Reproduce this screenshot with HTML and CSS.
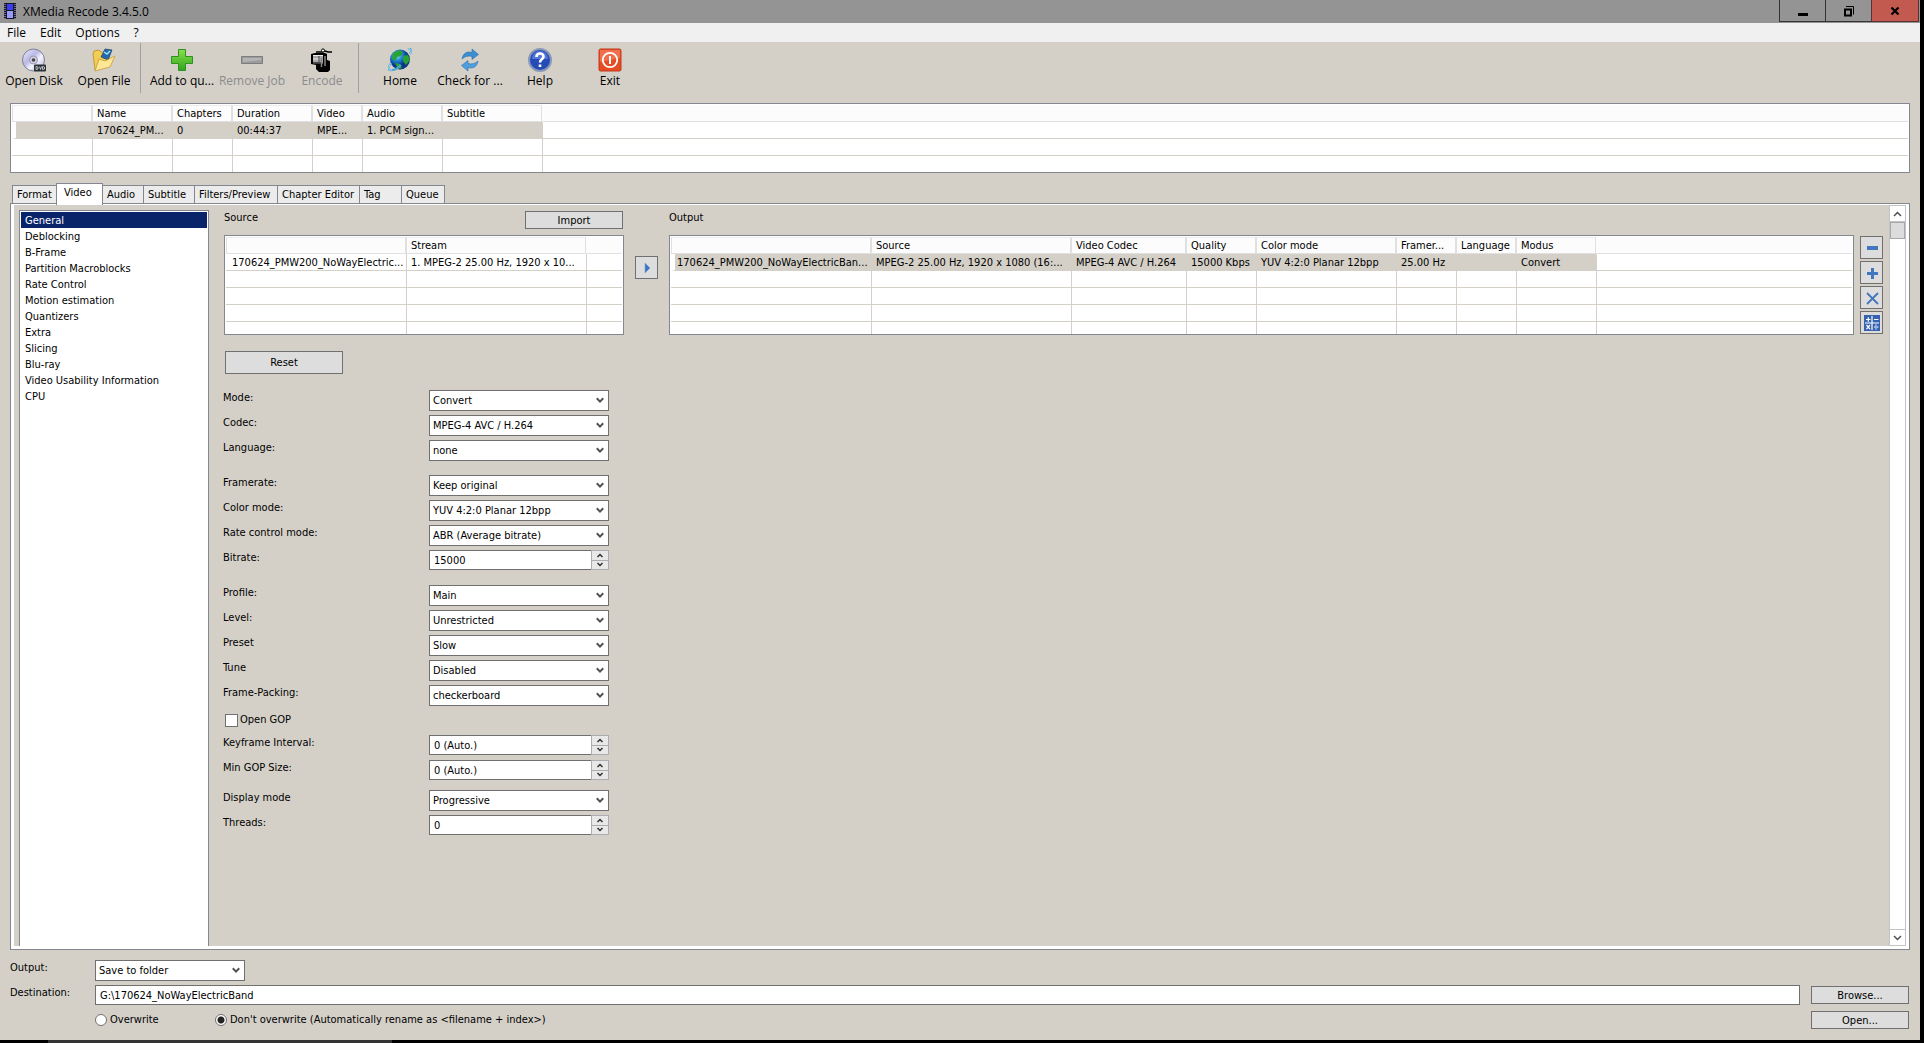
FILE: index.html
```html
<!DOCTYPE html>
<html lang="en">
<head>
<meta charset="utf-8">
<title>XMedia Recode 3.4.5.0</title>
<link rel="stylesheet" href="styles.css">
</head>
<body>
<div class="window">
  <header class="titlebar">
    <svg class="app-icon" width="12" height="16" viewBox="0 0 12 16"><rect width="12" height="16" fill="#16162a"/><rect x="3" y="1" width="6" height="6" fill="#3c3cf0"/><rect x="3" y="8" width="6" height="7" fill="#9a9afc"/><path d="M1 1v15M11 1v15" stroke="#c8c8c8" stroke-width="1" stroke-dasharray="1 1"/></svg>
    <h1>XMedia Recode 3.4.5.0</h1>
    <div class="caption-buttons">
      <button type="button" aria-label="Minimize"><svg width="12" height="12" viewBox="0 0 12 12"><path d="M1 8h10v3H1z"/></svg></button>
      <button type="button" aria-label="Restore"><svg width="12" height="12" viewBox="0 0 12 12"><path d="M2 4.500h6v6H2z" fill="none" stroke="#000" stroke-width="2"/><path d="M3 1.500h7.500v8" fill="none" stroke="#000"/></svg></button>
      <button type="button" class="close" aria-label="Close"><svg width="12" height="12" viewBox="0 0 12 12"><path d="M2.500 2.500l7 7M9.500 2.500l-7 7" stroke="#000" stroke-width="2.200"/></svg></button>
    </div>
  </header>
  <nav class="menubar">
    <button type="button">File</button><button type="button">Edit</button><button type="button">Options</button><button type="button">?</button>
  </nav>
  <div class="toolbar">
    <button type="button"><svg width="24" height="24" viewBox="0 0 24 24"><defs><linearGradient id="disc" x2="1" y2="1"><stop stop-color="#eef"/><stop offset=".4" stop-color="#b9b9e4"/><stop offset=".6" stop-color="#f4f4ff"/><stop offset="1" stop-color="#a8a8d6"/></linearGradient></defs><circle cx="11.500" cy="12" r="11" fill="url(#disc)" stroke="#7c7c96"/><circle cx="11.500" cy="12" r="4" fill="#d2d0e0" stroke="#9a98b8"/><circle cx="11.500" cy="12" r="1.800" fill="#444"/><rect x="12" y="16.500" width="12" height="7" rx="1" fill="#2a3036"/><path d="M14 18.500v3l2-.5v-2zM17.500 18.500l1 3 1-3M20.500 18.500v3l2-.5v-2z" stroke="#ddd" fill="none" stroke-width=".8"/></svg>Open Disk</button>
    <button type="button"><svg width="24" height="24" viewBox="0 0 24 24"><path d="M1 6l1-3 5-1 2 2 8 1v12L3 22z" fill="#f3cc55" stroke="#b98e26" stroke-width=".8"/><path d="M9 9l4-8 7 1-4 10z" fill="#2469a8" stroke="#174468" stroke-width=".7"/><path d="M12 4l3 2 3-3" stroke="#9fe0ff" stroke-width="1.500" fill="none"/><path d="M3 23L7 11l6 2 10-5-5 11z" fill="#fde796" stroke="#c79c34" stroke-width=".8"/></svg>Open File</button>
    <span class="separator"></span>
    <button type="button"><svg width="24" height="24" viewBox="0 0 24 24"><defs><linearGradient id="green" x2="0" y2="1"><stop stop-color="#8be04a"/><stop offset="1" stop-color="#2fa51c"/></linearGradient></defs><path d="M8.500 1.500h7v7h7v7h-7v7h-7v-7h-7v-7h7z" fill="url(#green)" stroke="#2d9220"/></svg>Add to qu...</button>
    <button type="button" disabled><svg width="24" height="24" viewBox="0 0 24 24"><path d="M1.500 8.500h21v7h-21z" fill="#9c9c9c" stroke="#7d7d7d"/><path d="M3 10h18v2l-18 2z" fill="#b4b4b4"/></svg>Remove Job</button>
    <button type="button" disabled><svg width="24" height="24" viewBox="0 0 24 24"><path d="M1 6l4-1h10l2 1v6l3 1v9l-2 2H9l-3-3v-4l-5-1z" fill="#000"/><path d="M3 7.500h10v8H3z" fill="#a8a8a8"/><path d="M3 7.500h10M3 11h7" stroke="#eee"/><path d="M3 15h9" stroke="#333" stroke-width="1.500"/><path d="M9 8v8" stroke="#444"/><path d="M11.500 10v9M15 8v10" stroke="#888" stroke-width="1.500"/><path d="M6 4h6l3-1 3 1h4" fill="none" stroke="#000" stroke-width="1.600"/><circle cx="13" cy="2.500" r="1.600" fill="#fff" stroke="#000"/></svg>Encode</button>
    <span class="separator"></span>
    <button type="button"><svg width="24" height="24" viewBox="0 0 24 24"><defs><radialGradient id="globe" cx=".35" cy=".3"><stop stop-color="#8ceaff"/><stop offset=".5" stop-color="#238ae0"/><stop offset="1" stop-color="#0a3684"/></radialGradient></defs><circle cx="12" cy="11.500" r="10" fill="url(#globe)"/><path d="M5 5l6-3 4 2-2 4-4 1-1 4-4-2zM15 8l5-1 2 5-4 5-3-4zM7 15l5 1 2 4-4 1z" fill="#28a434"/><path d="M20 1c3-1 4 1 2 5M3 15c-3 4-3 8 1 7 3 0 7-3 9-5" fill="none" stroke="#4aa4d4" stroke-width="2"/><path d="M20 1c3-1 4 1 2 5M3 15c-3 4-3 8 1 7" fill="none" stroke="#c4efff" stroke-width=".8"/></svg>Home</button>
    <button type="button"><svg width="24" height="24" viewBox="0 0 24 24"><path d="M4 11C5 5 9 3 14 4.500V1l6.500 5.500-6.500 5V8.500C10 7.500 7 8.500 4 11z" fill="#3b8ed2" stroke="#2870ae" stroke-width=".6"/><path d="M20 13c-1 6-5 8-10 6.500V23l-6.500-5.500 6.500-5v3c4 1 7 0 10-2.500z" fill="#4e9edd" stroke="#2870ae" stroke-width=".6"/></svg>Check for ...</button>
    <button type="button"><svg width="24" height="24" viewBox="0 0 24 24"><circle cx="12" cy="12" r="11" fill="#254bb7" stroke="#8a98b8" stroke-width="2"/><path d="M4 11a8 8 0 0 1 16 0z" fill="#5277d6"/><path d="M8.500 9c0-4.500 7-4.500 7-.5 0 3-3.500 2.500-3.500 6M12 16.500v2.500" fill="none" stroke="#fff" stroke-width="2.600"/></svg>Help</button>
    <button type="button"><svg width="24" height="24" viewBox="0 0 24 24"><rect x="1" y="1" width="22" height="22" rx="1.500" fill="#e64b22" stroke="#c2391a"/><path d="M2 2h20v8L2 14z" fill="#f0704c"/><circle cx="12" cy="12" r="7.200" fill="none" stroke="#fff" stroke-width="1.800"/><path d="M12 8v8" stroke="#fff" stroke-width="2"/></svg>Exit</button>
  </div>

  <main>
    <div class="listview jobs">
      <table>
        <colgroup><col class="w80"><col class="w80"><col class="w60"><col class="w80"><col class="w50"><col class="w80"><col class="w100"><col></colgroup>
        <thead><tr><th></th><th>Name</th><th>Chapters</th><th>Duration</th><th>Video</th><th>Audio</th><th>Subtitle</th><th></th></tr></thead>
        <tbody>
          <tr class="selected"><td></td><td>170624_PM...</td><td>0</td><td>00:44:37</td><td>MPE...</td><td>1. PCM sign...</td><td></td><td></td></tr>
          <tr><td></td><td></td><td></td><td></td><td></td><td></td><td></td><td></td></tr>
          <tr><td></td><td></td><td></td><td></td><td></td><td></td><td></td><td></td></tr>
        </tbody>
      </table>
    </div>

    <div class="tabs" role="tablist">
      <button type="button" role="tab">Format</button><button type="button" role="tab" aria-selected="true">Video</button><button type="button" role="tab">Audio</button><button type="button" role="tab">Subtitle</button><button type="button" role="tab">Filters/Preview</button><button type="button" role="tab">Chapter Editor</button><button type="button" role="tab">Tag</button><button type="button" role="tab">Queue</button>
    </div>

    <section class="panel">
      <div class="page">
        <ul class="categories">
          <li class="current">General</li><li>Deblocking</li><li>B-Frame</li><li>Partition Macroblocks</li><li>Rate Control</li><li>Motion estimation</li><li>Quantizers</li><li>Extra</li><li>Slicing</li><li>Blu-ray</li><li>Video Usability Information</li><li>CPU</li>
        </ul>
        <div class="settings">
          <div class="streams">
            <div class="source">
              <div class="heading"><h2>Source</h2><button type="button" class="button small">Import</button></div>
              <div class="listview">
                <table>
                  <colgroup><col class="w180"><col class="w180"><col></colgroup>
                  <thead><tr><th></th><th>Stream</th><th></th></tr></thead>
                  <tbody>
                    <tr class="indented"><td>170624_PMW200_NoWayElectric...</td><td>1. MPEG-2 25.00 Hz, 1920 x 10...</td><td></td></tr>
                    <tr><td></td><td></td><td></td></tr>
                    <tr><td></td><td></td><td></td></tr>
                    <tr><td></td><td></td><td></td></tr>
                    <tr><td></td><td></td><td></td></tr>
                  </tbody>
                </table>
              </div>
            </div>
            <button type="button" class="button square add" aria-label="Add stream"><svg width="16" height="16" viewBox="0 0 16 16"><path d="M6 3l5 5-5 5z" fill="#3f74c0" stroke="#7aa0da" stroke-width=".6"/></svg></button>
            <div class="output">
              <div class="heading"><h2>Output</h2></div>
              <div class="listview">
                <table>
                  <colgroup><col class="w200"><col class="w200"><col class="w115"><col class="w70"><col class="w140"><col class="w60"><col class="w60"><col class="w80"><col></colgroup>
                  <thead><tr><th></th><th>Source</th><th>Video Codec</th><th>Quality</th><th>Color mode</th><th>Framer...</th><th>Language</th><th>Modus</th><th></th></tr></thead>
                  <tbody>
                    <tr class="selected"><td>170624_PMW200_NoWayElectricBan...</td><td>MPEG-2 25.00 Hz, 1920 x 1080 (16:...</td><td>MPEG-4 AVC / H.264</td><td>15000 Kbps</td><td>YUV 4:2:0 Planar 12bpp</td><td>25.00 Hz</td><td></td><td>Convert</td><td></td></tr>
                    <tr><td></td><td></td><td></td><td></td><td></td><td></td><td></td><td></td><td></td></tr>
                    <tr><td></td><td></td><td></td><td></td><td></td><td></td><td></td><td></td><td></td></tr>
                    <tr><td></td><td></td><td></td><td></td><td></td><td></td><td></td><td></td><td></td></tr>
                    <tr><td></td><td></td><td></td><td></td><td></td><td></td><td></td><td></td><td></td></tr>
                  </tbody>
                </table>
              </div>
            </div>
            <div class="stream-tools">
              <button type="button" class="button square" aria-label="Remove"><svg width="16" height="16" viewBox="0 0 16 16"><path d="M3 6h11v4H3z" fill="#4377bd"/></svg></button>
              <button type="button" class="button square" aria-label="Add"><svg width="16" height="16" viewBox="0 0 16 16"><path d="M7 3h3v4h4v3h-4v4H7v-4H3V7h4z" fill="#4377bd"/></svg></button>
              <button type="button" class="button square" aria-label="Delete"><svg width="16" height="16" viewBox="0 0 16 16"><path d="M3 3l11 11M14 3L3 14" stroke="#4377bd" stroke-width="1.800"/></svg></button>
              <button type="button" class="button square" aria-label="Calculator"><svg width="16" height="16" viewBox="0 0 16 16"><path d="M0 0h16v16H0z" fill="#3563b0"/><path d="M8 1v14M1 8h14M2 4.500h4.500M4.300 2.300v4.500M10 4.500h4.500M2.500 10l3.500 4M6 10l-3.500 4M10 12h4.500M12 9.500v1.200M12 13.300v1.200" stroke="#fff" stroke-width="1.200"/></svg></button>
            </div>
          </div>

          <button type="button" class="button reset">Reset</button>

          <form>
            <div class="group">
              <div class="row"><label for="mode">Mode:</label><select id="mode"><option>Convert</option></select></div>
              <div class="row"><label for="codec">Codec:</label><select id="codec"><option>MPEG-4 AVC / H.264</option></select></div>
              <div class="row"><label for="lang">Language:</label><select id="lang"><option>none</option></select></div>
            </div>
            <div class="group">
              <div class="row"><label for="rate">Framerate:</label><select id="rate"><option>Keep original</option></select></div>
              <div class="row"><label for="color">Color mode:</label><select id="color"><option>YUV 4:2:0 Planar 12bpp</option></select></div>
              <div class="row"><label for="rc">Rate control mode:</label><select id="rc"><option>ABR (Average bitrate)</option></select></div>
              <div class="row"><label for="bitrate">Bitrate:</label><span class="spin"><input id="bitrate" type="text" value="15000"><span class="arrows"><button type="button" aria-label="Up"><svg width="8" height="5" viewBox="0 0 8 5"><path d="M1.500 4L4 1.500 6.500 4"/></svg></button><button type="button" aria-label="Down"><svg width="8" height="5" viewBox="0 0 8 5"><path d="M1.500 1L4 3.500 6.500 1"/></svg></button></span></span></div>
            </div>
            <div class="group tight">
              <div class="row"><label for="profile">Profile:</label><select id="profile"><option>Main</option></select></div>
              <div class="row"><label for="level">Level:</label><select id="level"><option>Unrestricted</option></select></div>
              <div class="row"><label for="preset">Preset</label><select id="preset"><option>Slow</option></select></div>
              <div class="row"><label for="tune">Tune</label><select id="tune"><option>Disabled</option></select></div>
              <div class="row"><label for="packing">Frame-Packing:</label><select id="packing"><option>checkerboard</option></select></div>
            </div>
            <label class="check"><input type="checkbox">Open GOP</label>
            <div class="group tight">
              <div class="row"><label for="keyint">Keyframe Interval:</label><span class="spin"><input id="keyint" type="text" value="0 (Auto.)"><span class="arrows"><button type="button" aria-label="Up"><svg width="8" height="5" viewBox="0 0 8 5"><path d="M1.500 4L4 1.500 6.500 4"/></svg></button><button type="button" aria-label="Down"><svg width="8" height="5" viewBox="0 0 8 5"><path d="M1.500 1L4 3.500 6.500 1"/></svg></button></span></span></div>
              <div class="row"><label for="mingop">Min GOP Size:</label><span class="spin"><input id="mingop" type="text" value="0 (Auto.)"><span class="arrows"><button type="button" aria-label="Up"><svg width="8" height="5" viewBox="0 0 8 5"><path d="M1.500 4L4 1.500 6.500 4"/></svg></button><button type="button" aria-label="Down"><svg width="8" height="5" viewBox="0 0 8 5"><path d="M1.500 1L4 3.500 6.500 1"/></svg></button></span></span></div>
            </div>
            <div class="group">
              <div class="row"><label for="display">Display mode</label><select id="display"><option>Progressive</option></select></div>
              <div class="row"><label for="threads">Threads:</label><span class="spin"><input id="threads" type="text" value="0"><span class="arrows"><button type="button" aria-label="Up"><svg width="8" height="5" viewBox="0 0 8 5"><path d="M1.500 4L4 1.500 6.500 4"/></svg></button><button type="button" aria-label="Down"><svg width="8" height="5" viewBox="0 0 8 5"><path d="M1.500 1L4 3.500 6.500 1"/></svg></button></span></span></div>
            </div>
          </form>
        </div>
        <div class="scrollbar">
          <button type="button" aria-label="Scroll up"><svg width="9" height="6" viewBox="0 0 9 6"><path d="M1 5l3.500-3.500L8 5"/></svg></button>
          <span class="thumb"></span>
          <button type="button" aria-label="Scroll down"><svg width="9" height="6" viewBox="0 0 9 6"><path d="M1 1l3.500 3.500L8 1"/></svg></button>
        </div>
      </div>
    </section>
  </main>

  <footer>
    <label for="target">Output:</label>
    <select id="target"><option>Save to folder</option></select>
    <label for="dest">Destination:</label>
    <input id="dest" type="text" value="G:\170624_NoWayElectricBand">
    <button type="button" class="button small browse">Browse...</button>
    <div class="radios">
      <label><input type="radio" name="overwrite">Overwrite</label>
      <label><input type="radio" name="overwrite" checked>Don't overwrite (Automatically rename as &lt;filename + index&gt;)</label>
    </div>
    <button type="button" class="button small">Open...</button>
  </footer>
</div>
<div class="taskbar"><span></span></div>
</body>
</html>
```
FILE: styles.css
```css
* { box-sizing: border-box; }

body {
  margin: 0;
  min-height: 100vh;
  padding-right: 4px;
  display: flex;
  flex-direction: column;
  background: #000;
  color: #000;
  font: 11px/14px "DejaVu Sans Condensed", "Liberation Sans", sans-serif;
}

button, input, select { font: inherit; color: inherit; margin: 0; border-radius: 0; }
button { padding: 0; }
svg { display: block; flex: none; }
h1, h2 { margin: 0; font: inherit; }

.window {
  flex: 1;
  display: flex;
  flex-direction: column;
  background: #d4d0c8;
}

/* Title bar and menu */
.titlebar {
  display: flex;
  align-items: flex-start;
  height: 23px;
  padding-left: 4px;
  background: #949494;
}
.app-icon { margin-top: 3px; }
.titlebar h1 {
  flex: 1;
  padding-left: 7px;
  font: 12px/24px "Open Sans", sans-serif;
}
.caption-buttons { display: flex; padding-right: 1px; }
.caption-buttons button {
  display: grid;
  place-items: center;
  width: 47px;
  height: 22px;
  margin-left: -1px;
  border: 1px solid #333;
  border-top: 0;
  background: #949494;
}
.caption-buttons .close { width: 48px; background: #c35a50; border-color: #5c3030; }

.menubar {
  display: flex;
  gap: 14px;
  height: 19px;
  padding-left: 7px;
  background: #f0f0f0;
}
.menubar button { border: 0; background: none; font: 12px/19px "Open Sans", sans-serif; }

/* Toolbar */
.toolbar { display: flex; height: 61px; margin-left: -1px; }
.toolbar button {
  display: flex;
  flex-direction: column;
  align-items: center;
  width: 70px;
  padding-top: 6px;
  border: 0;
  background: none;
  font: 12px/18px "Open Sans", sans-serif;
  white-space: nowrap;
}
.toolbar button:disabled { color: #8c8c8c; }
.separator { width: 1px; height: 50px; margin: 1px 6px 0 1px; background: #a0a0a0; }

/* Report lists */
.listview {
  height: 100px;
  padding: 1px;
  border: 1px solid #828790;
  background: #fff;
  overflow: hidden;
}
.jobs { height: 70px; }
.listview table {
  width: 100%;
  table-layout: fixed;
  border-collapse: separate;
  border-spacing: 0;
}
.listview th, .listview td {
  height: 17px;
  padding: 1px 0 0 4px;
  text-align: left;
  font-weight: normal;
  white-space: nowrap;
}
.listview td { padding-top: 2px; }
.listview th { background: #fcfcfc; border: 1px solid #e0e0e0; border-top-color: #ececec; }
.listview th:last-child { border-color: #fcfcfc; border-bottom-color: #e0e0e0; }
.listview td { border-bottom: 1px solid #d4d0c8; border-left: 1px solid #d4d0c8; }
.listview td:first-child { border-left: 0; }
.listview .selected td { background: #d4d0c8; }
.listview .selected td:first-child { border-left: 4px solid #fff; padding-left: 2px; }
.listview .selected td:last-child { background: #fff; }
.listview .indented td:first-child { padding-left: 6px; }
.w50 { width: 50px; }
.w60 { width: 60px; }
.w70 { width: 70px; }
.w80 { width: 80px; }
.w100 { width: 100px; }
.w115 { width: 115px; }
.w140 { width: 140px; }
.w180 { width: 180px; }
.w200 { width: 200px; }

/* Tabs */
main {
  flex: 1;
  display: flex;
  flex-direction: column;
  padding: 0 10px;
}
.tabs {
  position: relative;
  display: grid;
  grid-template-columns: 45px 45px 41px 51px 83px 82px 42px 43px;
  align-items: end;
  height: 20px;
  margin-top: 10px;
  padding-left: 2px;
}
.tabs button {
  height: 18px;
  padding: 1px 0 0 4px;
  margin-right: -1px;
  border: 1px solid #828790;
  border-bottom: 0;
  background: #ececec;
  text-align: left;
  white-space: nowrap;
}
.tabs button[aria-selected] {
  height: 22px;
  margin: 0 -1px -2px;
  padding: 0 0 3px 7px;
  background: #fff;
  z-index: 1;
}
.panel {
  flex: 1;
  display: flex;
  padding: 1px 3px 3px;
  border: 1px solid #828790;
  background: #fff;
}
.page { flex: 1; display: flex; padding-left: 5px; background: #d4d0c8; }

.categories {
  width: 190px;
  margin: 5px 0 0;
  padding: 1px;
  list-style: none;
  background: #fff;
  border: 1px solid #828790;
  border-bottom: 0;
}
.categories li { padding: 2px 0 0 4px; }
.categories .current { background: #0a246a; color: #fff; }

/* Settings page */
.settings { flex: 1; padding: 5px 6px 0 15px; }
.streams { display: flex; align-items: flex-end; }
.source { width: 400px; }
.output { flex: 1; }
.heading {
  display: flex;
  justify-content: space-between;
  height: 25px;
  padding-right: 1px;
}
.heading h2 { padding-top: 1px; }
.button {
  padding-top: 1px;
  border: 1px solid #707070;
  background: #ddd;
}
.button.small { width: 98px; height: 18px; line-height: 15px; margin-top: 1px; }
.button.square { display: grid; place-items: center; width: 23px; height: 23px; padding: 0; }
.add { margin: 0 11px 56px; }
.stream-tools { display: grid; gap: 2px; padding: 0 0 1px 6px; }
.reset { display: block; width: 118px; height: 23px; margin: 16px 0 16px 1px; }

form { margin-left: -1px; }
.group { margin-bottom: 14px; }
.row { display: flex; height: 25px; }
.group:not(:last-child) { margin-bottom: 10px; }
.group.tight:not(:last-child) { margin-bottom: 5px; }
.row label { width: 206px; padding-top: 1px; }
select {
  appearance: none;
  width: 180px;
  height: 21px;
  padding: 1px 20px 0 3px;
  border: 1px solid #707070;
  background: #fff url("data:image/svg+xml,%3Csvg xmlns='http://www.w3.org/2000/svg' width='8' height='7'%3E%3Cpath d='M.8 1.200L4 4.600 7.200 1.200' fill='none' stroke='%23505050' stroke-width='2'/%3E%3C/svg%3E") no-repeat right 4px center;
}
.spin {
  display: flex;
  width: 180px;
  height: 20px;
}
.spin input {
  flex: 1;
  min-width: 0;
  padding: 1px 5px 0 4px;
  border: 1px solid #707070;
  border-right: 0;
  background: #fff;
}
.arrows {
  display: grid;
  gap: 1px;
  width: 18px;
  padding: 1px;
  background: #abadb3;
}
.arrows button { display: grid; place-items: center; border: 0; background: #e8e8e8; }
.arrows path { fill: none; stroke: #303030; stroke-width: 1.5; }
.check { display: flex; align-items: center; gap: 2px; height: 20px; margin: -5px 0 5px; }
.check input {
  appearance: none;
  width: 13px;
  height: 13px;
  margin-left: 2px;
  border: 1px solid #707070;
  background: #fff;
}

/* Scroll bar */
.scrollbar {
  display: flex;
  flex-direction: column;
  width: 17px;
  background: #fff;
  border: 1px solid #c4c4c4;
  border-width: 0 1px;
}
.scrollbar button {
  display: grid;
  place-items: center;
  height: 17px;
  border: 1px solid #c4c4c4;
  border-width: 1px 0;
  background: #fff;
}
.scrollbar button:last-child { margin-top: auto; }
.scrollbar path { fill: none; stroke: #505050; stroke-width: 1.5; }
.thumb { height: 17px; border: 1px solid #a8a8a8; background: #dcdcdc; }

/* Output destination */
footer {
  display: grid;
  grid-template-columns: 85px 1fr 98px;
  grid-template-rows: 25px 25px 30px;
  padding: 10px 11px 0 10px;
}
footer > label { padding-top: 1px; }
footer select { width: 150px; grid-column: 2 / 4; }
footer > input {
  height: 20px;
  margin-right: 11px;
  padding: 1px 4px 0;
  border: 1px solid #707070;
  background: #fff;
}
.radios { display: flex; grid-column: 2; }
.radios label { display: flex; gap: 3px; height: 19px; align-items: center; min-width: 120px; }
.radios input {
  appearance: none;
  width: 12px;
  height: 12px;
  border: 1px solid #707070;
  border-radius: 50%;
  background: #fff;
}
.radios input:checked { background: radial-gradient(#222 3px, #fff 4px); }

.taskbar { height: 3px; padding-left: 48px; }
.taskbar span { display: block; width: 344px; height: 3px; background: #333; }
```
